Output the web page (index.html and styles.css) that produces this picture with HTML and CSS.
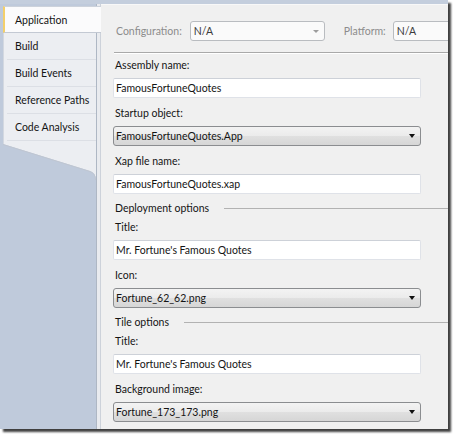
FILE: index.html
```html
<!DOCTYPE html>
<html lang="en">
<head>
    <meta charset="UTF-8">
    <title>FamousFortuneQuotes - Properties</title>
    <link rel="stylesheet" href="styles.css">
</head>
<body>
    <div class="window">
        <div class="sidebar">
            <ul class="tabs">
                <li class="tab active">Application</li>
                <li class="tab">Build</li>
                <li class="tab">Build Events</li>
                <li class="tab">Reference Paths</li>
                <li class="tab">Code Analysis</li>
            </ul>
            <!-- slanted bottom of the tab list -->
            <svg class="tabs-tail" width="101" height="36" viewBox="0 0 101 36">
                <path d="M3 0 L90 27 Q96 29 96 36 V0 Z" fill="#eceef2"/>
                <path d="M3 0.5 L90 27.5 Q95.5 29.5 95.5 36" fill="none" stroke="#bfc6d1"/>
            </svg>
        </div>

        <div class="page">
            <div class="config-bar">
                <span class="config-label">Configuration:</span>
                <div class="combo disabled"><span>N/A</span><i class="arrow"></i></div>
                <span class="config-label platform">Platform:</span>
                <div class="combo disabled"><span>N/A</span><i class="arrow"></i></div>
            </div>
            <div class="rule"></div>

            <div class="field">
                <div class="label">Assembly name:</div>
                <div class="textbox">FamousFortuneQuotes</div>
            </div>
            <div class="field">
                <div class="label">Startup object:</div>
                <div class="combo"><span>FamousFortuneQuotes.App</span><i class="arrow"></i></div>
            </div>
            <div class="field">
                <div class="label">Xap file name:</div>
                <div class="textbox">FamousFortuneQuotes.xap</div>
            </div>

            <div class="group-title"><span>Deployment options</span><div class="group-line"></div></div>
            <div class="field">
                <div class="label">Title:</div>
                <div class="textbox">Mr. Fortune's Famous Quotes</div>
            </div>
            <div class="field">
                <div class="label">Icon:</div>
                <div class="combo"><span>Fortune_62_62.png</span><i class="arrow"></i></div>
            </div>

            <div class="group-title"><span>Tile options</span><div class="group-line"></div></div>
            <div class="field">
                <div class="label">Title:</div>
                <div class="textbox">Mr. Fortune's Famous Quotes</div>
            </div>
            <div class="field">
                <div class="label">Background image:</div>
                <div class="combo"><span>Fortune_173_173.png</span><i class="arrow"></i></div>
            </div>
        </div>
    </div>
</body>
</html>
```

FILE: styles.css
```css
body {
    margin: 0;
    width: 453px;
    height: 434px;
    overflow: hidden;
    background-color: #fff;
    font-family: Lato, "Open Sans", sans-serif;
    font-size: 10.5px;
    color: #141414;
}
.window {
    width: 448px;
    height: 429px;
    box-sizing: border-box;
    padding-top: 4px;
    display: flex;
    background-color: #c4cedd;
    box-shadow: 3px 3px 2px rgba(0, 0, 0, 0.75);
}

/* left tab column */
.sidebar {
    width: 101px;
    flex-shrink: 0;
    padding-top: 2px;
    display: flex;
    flex-direction: column;
    background: linear-gradient(to right,
        #bfcadb 0, #bfcadb 96px,
        #aeb7c4 96px, #aeb7c4 97px,
        #e9ebef 97px, #e9ebef 100px,
        #cdd2da 100px, #cdd2da 101px);
}
.tabs {
    list-style: none;
    margin: 0 0 0 3px;
    padding: 0 0 3px 0;
    width: 93px;
    background-color: #eceef2;
    border-left: 1px solid #d3d8e0;
    box-sizing: border-box;
}
.tab {
    height: 26px;
    line-height: 26px;
    padding-left: 8px;
    border-bottom: 1px solid #dcdfe5;
    margin-left: 3px;
    white-space: nowrap;
}
.tab.active {
    height: 25px;
    margin: 0 -5px 0 -1px;
    padding-left: 10px;
    background-color: #fbfbfc;
    border-top: 1px solid #ccd2db;
    border-bottom: 1px solid #c3c9d3;
    border-left: 2px solid #f3cf6a;
}
.tabs-tail {
    display: block;
}

/* property page */
.page {
    flex: 1;
    overflow: hidden;
    background-color: #f0f0f0;
    border-top: 1px solid #f8f8f8;
    padding-left: 12px;
}
.config-bar {
    display: flex;
    align-items: center;
    height: 20px;
    margin-top: 16px;
    white-space: nowrap;
}
.config-label {
    color: #8c8c8c;
    margin: 0 8px 0 3px;
    flex-shrink: 0;
}
.config-label.platform {
    margin-left: 19px;
    margin-right: 7px;
}
.rule {
    height: 1px;
    margin: 11px 0 1px 1px;
    background-color: #a9a9a9;
    border-bottom: 1px solid #fff;
}

.field {
    margin-bottom: 5px;
}
.label {
    height: 20px;
    line-height: 20px;
    margin-bottom: 3px;
    padding-left: 2px;
}
.textbox, .combo {
    width: 308px;
    height: 20px;
    box-sizing: border-box;
    line-height: 18px;
    padding-left: 2px;
    white-space: nowrap;
}
.textbox {
    background-color: #fff;
    border: 1px solid #dfe2e8;
    border-top-color: #cdd1d8;
    border-radius: 2px;
}
.combo {
    display: flex;
    align-items: center;
    justify-content: space-between;
    padding-right: 5px;
    border: 1px solid #8b8d90;
    border-radius: 3px;
    background: linear-gradient(#f3f3f3, #ebebeb 50%, #e0e0e0 50%, #d6d6d6);
}
.combo .arrow {
    width: 0;
    height: 0;
    border-left: 3.5px solid transparent;
    border-right: 3.5px solid transparent;
    border-top: 4px solid #111;
}
.combo.disabled {
    width: 135px;
    flex-shrink: 0;
    padding-left: 3px;
    padding-right: 5px;
    border-color: #b9bcc0;
    background: #fafafa;
    color: #3a3a3a;
}
.combo.disabled .arrow {
    border-left-width: 3px;
    border-right-width: 3px;
    border-top: 3px solid #9d9d9d;
}

.group-title {
    display: flex;
    align-items: center;
    height: 18px;
    padding-left: 2px;
    white-space: nowrap;
}
.group-line {
    flex: 1;
    height: 1px;
    margin-left: 15px;
    background-color: #b2b2b2;
}
```
